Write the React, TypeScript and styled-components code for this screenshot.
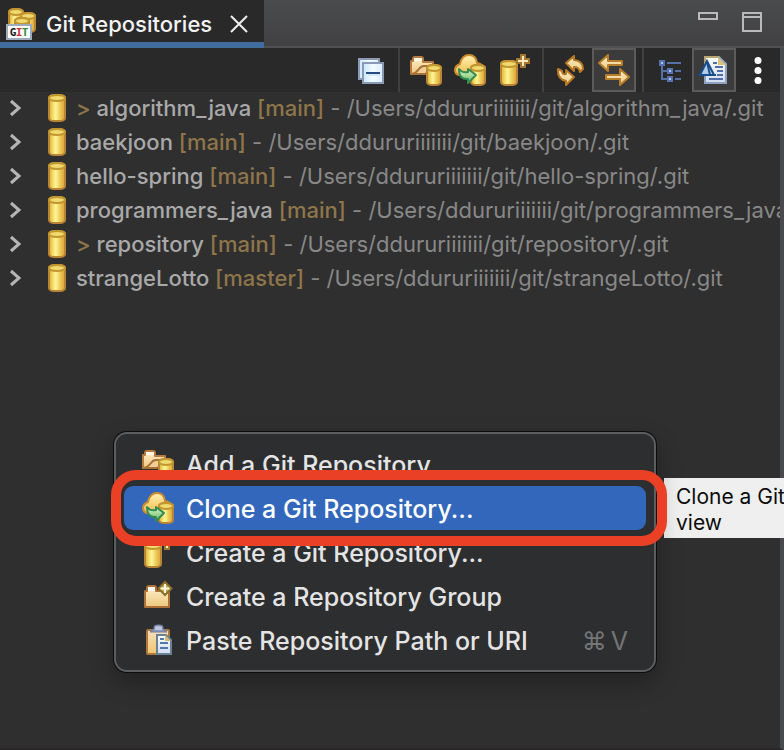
import React from "react";
import styled, { createGlobalStyle } from "styled-components";

const GlobalStyle = createGlobalStyle`
  * { box-sizing: border-box; }
  body { margin: 0; background: #2f2f2f; }
  button { font: inherit; color: inherit; background: none; border: 0; padding: 0; margin: 0; }
  svg { display: block; flex: none; }
`;

const View = styled.main`
  position: relative;
  display: flex;
  flex-direction: column;
  min-height: 100vh;
  overflow: hidden;
  background: #2f2f2f;
  font-family: Inter, "Liberation Sans", sans-serif;
  font-size: 22px;
`;

const TabBar = styled.header`
  display: flex;
  justify-content: space-between;
  height: 48px;
  background: linear-gradient(#4a4b4d, #414143);
  box-shadow: inset 0 -2px #4f5052;
`;

const Tab = styled.div`
  display: flex;
  align-items: center;
  width: 264px;
  padding: 0 14px 0 6px;
  background: #292929;
  border-bottom: 6px solid #416d9c;
`;

const TabTitle = styled.h1`
  flex: 1;
  margin: 6px 0 0 8px;
  font-size: 22px;
  font-weight: 500;
  line-height: 26px;
  white-space: nowrap;
  color: #f2f2f2;
`;

const CloseButton = styled.button`
  padding: 6px 2px 0;
`;

const TabIcon = styled.span`
  padding-top: 6px;
`;

const WindowControls = styled.div`
  display: flex;
  align-items: flex-start;
  gap: 24px;
  padding: 12px 22px 0 0;
`;

const Panel = styled.section`
  flex: 1;
  min-width: 0;
  border-right: 4px solid #484a4d;
  border-bottom: 2px solid #2a2728;
`;

const Toolbar = styled.div`
  display: flex;
  justify-content: flex-end;
  height: 44px;
  background: #292929;
`;

const ToolButton = styled.button<{ $active?: boolean }>`
  display: flex;
  align-items: center;
  justify-content: center;
  width: 44px;
  background: ${(p) => (p.$active ? "#3b3b3b" : "transparent")};
  border: 2px solid ${(p) => (p.$active ? "#5b5b5b" : "transparent")};
`;

const Separator = styled.span`
  width: 2px;
  margin: 0 4px 0 6px;
  background: #414141;
`;

const RepoList = styled.ul`
  list-style: none;
  margin: 0;
  padding: 0;
`;

const RepoRow = styled.li`
  display: flex;
  align-items: center;
  height: 34px;
  padding-bottom: 2px;
  overflow: hidden;
  white-space: pre;
`;

const Expander = styled.button`
  flex: none;
  width: 48px;
  padding-left: 8px;
`;

const RepoText = styled.span`
  flex: none;
  margin-left: 10px;
  font-weight: 500;
  color: #a9a9a9;
`;

const Decoration = styled.span`
  color: #8e754a;
`;

const Path = styled.span`
  font-weight: 400;
  color: #888888;
`;

const Menu = styled.div`
  position: absolute;
  left: 114px;
  top: 432px;
  width: 542px;
  padding: 8px;
  background: #2d2e30;
  border: 2px solid #5c5d5e;
  border-radius: 13px;
  box-shadow: 0 0 0 1px #0c0c0c, 0 10px 24px rgba(0, 0, 0, 0.3);
`;

const MenuItem = styled.button<{ $selected?: boolean }>`
  position: relative;
  z-index: ${(p) => (p.$selected ? 1 : 0)};
  display: flex;
  align-items: center;
  gap: 12px;
  width: 100%;
  height: 44px;
  padding: 0 18px;
  border-radius: 9px;
  font-size: 25px;
  font-weight: 500;
  white-space: nowrap;
  color: ${(p) => (p.$selected ? "#ffffff" : "#e4e4e4")};
  background: ${(p) => (p.$selected ? "#3267bb" : "transparent")};
`;

const MenuLabel = styled.span`
  padding-top: 2px;
`;

const Shortcut = styled.kbd`
  display: flex;
  gap: 4px;
  margin-left: auto;
  padding-top: 2px;
  font-family: inherit;
  font-weight: 400;
  color: #747576;
`;

const Highlight = styled.span`
  position: absolute;
  inset: -16px -21px -16px -13px;
  border: 10px solid #ea4025;
  border-radius: 25px;
  pointer-events: none;
`;

const Tooltip = styled.div`
  position: absolute;
  left: 664px;
  top: 478px;
  padding: 6px 12px 2px;
  background: #efefef;
  color: #0d0d0d;
  font-size: 21px;
  line-height: 26px;
  white-space: nowrap;
`;

const Definitions = styled.svg`
  position: absolute;
`;

const Gradients = () => (
  <Definitions width="0" height="0" aria-hidden="true">
    <defs>
      <linearGradient id="gold">
        <stop offset="0" stopColor="#d9aa38" />
        <stop offset=".2" stopColor="#f0d65e" />
        <stop offset=".42" stopColor="#fdf59c" />
        <stop offset=".65" stopColor="#efd25d" />
        <stop offset="1" stopColor="#d89f3a" />
      </linearGradient>
      <linearGradient id="folder" x2="0" y2="1">
        <stop offset="0" stopColor="#fff0d0" />
        <stop offset="1" stopColor="#edc87b" />
      </linearGradient>
      <linearGradient id="cloud" x2="0" y2="1">
        <stop offset="0" stopColor="#fff2b4" />
        <stop offset="1" stopColor="#f3b944" />
      </linearGradient>
      <linearGradient id="green" x2="0" y2="1">
        <stop offset="0" stopColor="#d8f5c4" />
        <stop offset="1" stopColor="#68b967" />
      </linearGradient>
      <linearGradient id="paper" x2="0" y2="1">
        <stop offset="0" stopColor="#fbfcf6" />
        <stop offset="1" stopColor="#d3ddf2" />
      </linearGradient>
      <linearGradient id="frost">
        <stop offset="0" stopColor="#c9e7fc" />
        <stop offset=".5" stopColor="#f4fbff" />
        <stop offset="1" stopColor="#d9edfc" />
      </linearGradient>
      <linearGradient id="clip" x2="0" y2="1">
        <stop offset="0" stopColor="#f7dfbd" />
        <stop offset="1" stopColor="#f1c66f" />
      </linearGradient>
    </defs>
  </Definitions>
);

type BarrelProps = { x: number; y: number; w: number; h: number };

const Barrel = ({ x, y, w, h }: BarrelProps) => (
  <g strokeWidth="2">
    <rect x={x + 1} y={y + 1} width={w - 2} height={h - 2} rx="5" ry="3" fill="url(#gold)" stroke="#b98434" />
    <ellipse cx={x + w / 2} cy={y + 4} rx={w / 2 - 1} ry="3" fill="#efd970" stroke="#c3972f" />
  </g>
);

const Icon = ({ children }: { children: React.ReactNode }) => (
  <svg width="32" height="32" viewBox="0 0 32 32" fill="none" aria-hidden="true">
    {children}
  </svg>
);

const RepoIcon = () => (
  <svg width="18" height="28" viewBox="0 0 18 28" fill="none" aria-hidden="true">
    <Barrel x={0} y={0} w={18} h={28} />
  </svg>
);

const AddIcon = () => (
  <Icon>
    <path d="M1 20V7h2V5q0-2 2-2h6q2 0 2 2v3h10v4L8 20H1z" fill="url(#folder)" stroke="#b97b3d" strokeWidth="2" strokeLinejoin="round" />
    <path d="M4 4h8v3H4z" fill="#fff8e6" />
    <path d="M2 20q4-1 7-5 2-3 5-3h9v3l-8 5H2z" fill="#f0d098" stroke="#a87135" strokeWidth="2" />
    <Barrel x={16} y={10} w={16} h={22} />
  </Icon>
);

const CloneIcon = () => (
  <Icon>
    <path d="M5 21Q1 20 1 16t5-6Q8 1 15 1t8 8q6 1 7 6l-6 7z" fill="url(#cloud)" stroke="#cc8c2d" strokeWidth="2" />
    <Barrel x={16} y={10} w={16} h={22} />
    <path d="M5 15q3 4 9 3v-3l8 6-8 8v-4Q5 26 5 15z" fill="url(#green)" stroke="#338c53" strokeWidth="2" strokeLinejoin="round" />
  </Icon>
);

const CreateIcon = () => (
  <Icon>
    <Barrel x={2} y={6} w={18} h={26} />
    <path d="M23 1h4v4h4v4h-4v4h-4V9h-4V5h4z" fill="#fbebb8" stroke="#a37531" strokeWidth="2" />
  </Icon>
);

const GroupIcon = () => (
  <Icon>
    <path d="M3 27V11h2V8q0-2 2-2h5q2 0 2 2v3h13v16z" fill="url(#folder)" stroke="#ac7136" strokeWidth="2" strokeLinejoin="round" />
    <path d="M6 7h7v4H6z" fill="#fffaf1" />
    <path d="M23 2l6.500 6.500L23 15l-6.500-6.500z" fill="#c9a959" stroke="#8b702c" strokeWidth="2" />
    <path d="M23 4v9M18.500 8.500h9" stroke="#fff7d9" strokeWidth="2" />
  </Icon>
);

const PasteIcon = () => (
  <Icon>
    <rect x="5" y="6" width="22" height="24" rx="1" fill="url(#clip)" stroke="#ad773d" strokeWidth="2" />
    <path d="M8 8l4-3V3q0-2 3-2h3q3 0 3 2v2l4 3z" fill="#8998bb" stroke="#6c7ba0" />
    <path d="M13 3q3-2 7 0v3h-7z" fill="#bac6dc" />
    <path d="M15 11h9l5 5v14H15z" fill="url(#paper)" stroke="#688098" strokeWidth="2" />
    <path d="M23 11v6h6z" fill="#d4b875" />
    <path d="M18 15h4M18 19h8M18 24h8" stroke="#5279aa" strokeWidth="2" />
  </Icon>
);

const CollapseIcon = () => (
  <Icon>
    <rect x="5" y="5" width="20" height="20" fill="url(#frost)" stroke="#8b9bb6" strokeWidth="2" />
    <rect x="9" y="9" width="20" height="20" fill="url(#frost)" stroke="#8999b6" strokeWidth="2" />
    <path d="M12 19h14" stroke="#254b83" strokeWidth="2" />
    <path d="M14 21h12" stroke="#c4d7e9" />
  </Icon>
);

const RefreshIcon = () => (
  <Icon>
    <g fill="url(#folder)" stroke="#b87925" strokeWidth="2" strokeLinejoin="round">
      <path d="M12 9l8-7v4q9 1 9 9l-3 3q-1-5-6-5v4z" />
      <path d="M20 23l-8 8v-4q-9-2-8-12l4 2q0 4 4 3v-4z" />
    </g>
  </Icon>
);

const LinkIcon = () => (
  <Icon>
    <g fill="url(#folder)" stroke="#b67d2a" strokeWidth="2" strokeLinejoin="round">
      <path d="M1 9l9-8v6h14v4H10v6z" />
      <path d="M31 23l-9-8v6H8v4h14v6z" />
    </g>
  </Icon>
);

const TreeIcon = () => (
  <Icon>
    <path d="M8 12v13h6M8 17h6" stroke="#5671a4" strokeWidth="2" />
    <path d="M13 9h14M21 17h6M21 25h6" stroke="#5671a8" strokeWidth="2" />
    <g fill="#b1c4ed" stroke="#5872b0" strokeWidth="2">
      <path d="M6 7h4v4H6zM14 15h4v4h-4zM14 23h4v4h-4z" />
    </g>
  </Icon>
);

const DocumentIcon = () => (
  <Icon>
    <path d="M7 3h14l7 7v19H7z" fill="url(#paper)" stroke="#8ea1c2" strokeWidth="2" />
    <path d="M7 18V3h14" stroke="#b8a66e" strokeWidth="2" />
    <path d="M20 3v8h8z" fill="#dbc27c" />
    <path d="M15 9h4M17 13h8M19 17h6M19 21h6M11 25h14" stroke="#526fa5" strokeWidth="2" />
    <path d="M2 21L9 7l7 14z" fill="#b6cbe8" stroke="#174d8b" strokeWidth="2" />
    <path d="M9 8l3 13" stroke="#174d8b" strokeWidth="2" />
    <path d="M0 21h18" stroke="#174d8b" strokeWidth="2" />
  </Icon>
);

const MoreIcon = () => (
  <Icon>
    <g fill="#fff">
      <circle cx="16" cy="6.500" r="3.500" />
      <circle cx="16" cy="16.500" r="3.500" />
      <circle cx="16" cy="26.500" r="3.500" />
    </g>
  </Icon>
);

const GitIcon = () => (
  <Icon>
    <Barrel x={2} y={0} w={16} h={24} />
    <Barrel x={14} y={4} w={16} h={21} />
    <Barrel x={8} y={9} w={16} h={20} />
    <rect x="1" y="17" width="24" height="14" fill="#fff" stroke="#9caabb" strokeWidth="2" />
    <g fontFamily="DejaVu Sans Mono, monospace" fontSize="11" fontWeight="700" textAnchor="middle">
      <text x="7" y="28" fill="#202020">G</text>
      <text x="13" y="28" fill="#c52d37">I</text>
      <text x="19" y="28" fill="#318a38">T</text>
    </g>
  </Icon>
);

const repositories = [
  { name: "algorithm_java", branch: "main", changed: true },
  { name: "baekjoon", branch: "main" },
  { name: "hello-spring", branch: "main" },
  { name: "programmers_java", branch: "main" },
  { name: "repository", branch: "main", changed: true },
  { name: "strangeLotto", branch: "master" },
];

const actions = [
  { label: "Add a Git Repository...", icon: <AddIcon /> },
  { label: "Clone a Git Repository...", icon: <CloneIcon />, selected: true },
  { label: "Create a Git Repository...", icon: <CreateIcon /> },
  { label: "Create a Repository Group", icon: <GroupIcon /> },
  { label: "Paste Repository Path or URI", icon: <PasteIcon />, keys: ["⌘", "V"] },
];

export default function App() {
  return (
    <View>
      <GlobalStyle />
      <Gradients />
      <TabBar>
        <Tab>
          <TabIcon><GitIcon /></TabIcon>
          <TabTitle>Git Repositories</TabTitle>
          <CloseButton aria-label="Close">
            <svg width="18" height="18" viewBox="0 0 18 18" stroke="#f0f0f0" strokeWidth="2">
              <path d="M1 1l16 16M17 1L1 17" />
            </svg>
          </CloseButton>
        </Tab>
        <WindowControls>
          <button aria-label="Minimize">
            <svg width="20" height="8" viewBox="0 0 20 8" fill="none" stroke="#bababa" strokeWidth="2">
              <rect x="1" y="1" width="18" height="6" />
            </svg>
          </button>
          <button aria-label="Maximize">
            <svg width="20" height="20" viewBox="0 0 20 20" fill="none" stroke="#bababa" strokeWidth="2">
              <path d="M1 1h18v18H1zM1 5h18" />
            </svg>
          </button>
        </WindowControls>
      </TabBar>
      <Panel>
        <Toolbar role="toolbar">
          <ToolButton aria-label="Collapse All"><CollapseIcon /></ToolButton>
          <Separator />
          <ToolButton aria-label="Add repository"><AddIcon /></ToolButton>
          <ToolButton aria-label="Clone repository"><CloneIcon /></ToolButton>
          <ToolButton aria-label="Create repository"><CreateIcon /></ToolButton>
          <Separator />
          <ToolButton aria-label="Refresh"><RefreshIcon /></ToolButton>
          <ToolButton $active aria-pressed="true" aria-label="Link with selection"><LinkIcon /></ToolButton>
          <Separator />
          <ToolButton aria-label="Branch hierarchy"><TreeIcon /></ToolButton>
          <ToolButton $active aria-pressed="true" aria-label="Show details"><DocumentIcon /></ToolButton>
          <ToolButton aria-label="View menu"><MoreIcon /></ToolButton>
        </Toolbar>
        <RepoList>
          {repositories.map(({ name, branch, changed }) => (
            <RepoRow key={name}>
              <Expander aria-label={`Expand ${name}`}>
                <svg width="14" height="18" viewBox="0 0 14 18" fill="none" stroke="#b5b5b5" strokeWidth="3">
                  <path d="M3 2l8 7-8 7" />
                </svg>
              </Expander>
              <RepoIcon />
              <RepoText>
                {changed && <Decoration>{"> "}</Decoration>}
                {name}
                <Decoration>{` [${branch}]`}</Decoration>
                <Path>{` - /Users/ddururiiiiiii/git/${name}/.git`}</Path>
              </RepoText>
            </RepoRow>
          ))}
        </RepoList>
      </Panel>
      <Tooltip role="tooltip">
        Clone a Git Repository and add the clone to this
        <br />
        view
      </Tooltip>
      <Menu role="menu">
        {actions.map(({ label, icon, selected, keys }) => (
          <MenuItem key={label} role="menuitem" $selected={selected}>
            {icon}
            <MenuLabel>{label}</MenuLabel>
            {keys && <Shortcut>{keys.map((key) => <span key={key}>{key}</span>)}</Shortcut>}
            {selected && <Highlight />}
          </MenuItem>
        ))}
      </Menu>
    </View>
  );
}
